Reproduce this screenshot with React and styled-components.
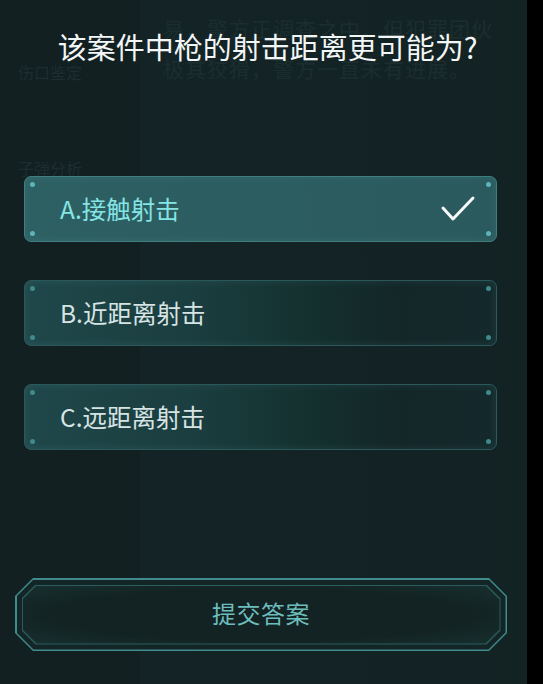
import React from 'react';
import styled, { createGlobalStyle } from 'styled-components';

const GlobalStyle = createGlobalStyle`
  html, body {
    margin: 0;
    padding: 0;
    background: #000;
  }
  body {
    font-family: "Noto Sans CJK SC", "Noto Sans", sans-serif;
  }
`;

const Screen = styled.div`
  width: 543px;
  height: 684px;
  display: grid;
  grid-template-columns: 527px 16px;
  overflow: hidden;
`;

const Edge = styled.div`
  background: #000;
`;

const Stage = styled.div`
  position: relative;
  background: #132122;
  overflow: hidden;
`;

/* dimmed page behind the quiz */
const Backdrop = styled.div`
  display: grid;
  grid-template-columns: 140px 1fr;
  height: 100%;
`;

const SideColumn = styled.div`
  background: #122021;
  padding: 60px 0 0 18px;
  display: flex;
  flex-direction: column;
  gap: 72px;
`;

const GhostLabel = styled.div`
  color: #1c2e2f;
  font-size: 16px;
  line-height: 24px;
`;

const StoryColumn = styled.div`
  padding: 8px 0 0 23px;
  background: linear-gradient(90deg, #142426 0%, #132223 100%);
`;

const GhostText = styled.p`
  margin: 0;
  color: #1b2e2f;
  font-size: 21px;
  line-height: 40px;
  letter-spacing: 1px;
`;

const Overlay = styled.div`
  position: absolute;
  inset: 0;
  display: flex;
  flex-direction: column;
  padding: 26px 30px 0 24px;
`;

const Title = styled.h1`
  margin: 0 0 0 14px;
  color: #f2f6f6;
  font-size: 29px;
  font-weight: 400;
  line-height: 40px;
  text-align: center;
`;

const OptionList = styled.div`
  margin-top: 110px;
  display: flex;
  flex-direction: column;
  gap: 38px;
`;

const Option = styled.div`
  position: relative;
  height: 66px;
  box-sizing: border-box;
  border-radius: 7px;
  border: 1px solid ${p => (p.$selected ? '#3f7f82' : '#2a585b')};
  background: ${p => (p.$selected
    ? 'linear-gradient(90deg, #2d6063 0%, #2c5d60 55%, #2a5a5d 100%)'
    : 'linear-gradient(90deg, #1f4749 0%, #1b3e40 35%, #14302f 60%, #132628 80%, #14292c 100%)')};
  box-shadow: inset 0 0 10px rgba(120, 200, 200, 0.12);
  display: flex;
  align-items: center;
  justify-content: space-between;
  padding: 0 18px 0 35px;
`;

const OptionText = styled.span`
  color: ${p => (p.$selected ? '#85e4e4' : '#d7e4e4')};
  font-size: 24.5px;
  line-height: 32px;
`;

const Dot = styled.span`
  position: absolute;
  width: 5px;
  height: 5px;
  border-radius: 50%;
  background: ${p => (p.$selected ? '#5cb5b7' : '#3f8a8c')};
  ${p => (p.$top ? 'top: 5px;' : 'bottom: 5px;')}
  ${p => (p.$left ? 'left: 5px;' : 'right: 5px;')}
`;

const Spacer = styled.div`
  flex: 1;
`;

const chamfer = c => `polygon(${c}px 0, calc(100% - ${c}px) 0, 100% ${c}px, 100% calc(100% - ${c}px), calc(100% - ${c}px) 100%, ${c}px 100%, 0 calc(100% - ${c}px), 0 ${c}px)`;

const SubmitFrame = styled.div`
  margin: 0 -10px 33px -9px;
  height: 73px;
  box-sizing: border-box;
  padding: 1.5px;
  background: #3f8b8d;
  clip-path: ${chamfer(18)};
`;

const SubmitGap = styled.div`
  height: 100%;
  box-sizing: border-box;
  padding: 5px;
  background: #142526;
  clip-path: ${chamfer(17)};
`;

const SubmitInner = styled.div`
  height: 100%;
  box-sizing: border-box;
  padding: 1px;
  background: #295c5e;
  clip-path: ${chamfer(14)};
`;

const SubmitButton = styled.button`
  width: 100%;
  height: 100%;
  border: 0;
  margin: 0;
  background: radial-gradient(ellipse at center, #132222 60%, #17302f 100%);
  clip-path: ${chamfer(14)};
  color: #6dbdbd;
  font-family: "Noto Sans CJK SC", "Noto Sans", sans-serif;
  font-size: 24px;
  letter-spacing: 0.5px;
  display: flex;
  align-items: center;
  justify-content: center;
  padding: 0 0 4px 0;
`;

const Check = () => (
  <svg width="40" height="32" viewBox="0 0 40 32">
    <polyline points="5,15 15,26 35,5" fill="none" stroke="#f4f8f8" strokeWidth="3" strokeLinecap="round" strokeLinejoin="round" />
  </svg>
);

const options = [
  { key: 'A', text: 'A.接触射击', selected: true },
  { key: 'B', text: 'B.近距离射击' },
  { key: 'C', text: 'C.远距离射击' },
];

const App = () => (
  <>
    <GlobalStyle />
    <Screen>
      <Stage>
        <Backdrop>
          <SideColumn>
            <GhostLabel>伤口鉴定</GhostLabel>
            <GhostLabel>子弹分析</GhostLabel>
          </SideColumn>
          <StoryColumn>
            <GhostText>易，警方正调查之中，但犯罪团伙</GhostText>
            <GhostText>极其狡猾，警方一直未有进展。</GhostText>
          </StoryColumn>
        </Backdrop>
        <Overlay>
          <Title>该案件中枪的射击距离更可能为?</Title>
          <OptionList>
            {options.map(o => (
              <Option key={o.key} $selected={o.selected}>
                <Dot $top $left $selected={o.selected} />
                <Dot $top $selected={o.selected} />
                <Dot $left $selected={o.selected} />
                <Dot $selected={o.selected} />
                <OptionText $selected={o.selected}>{o.text}</OptionText>
                {o.selected && <Check />}
              </Option>
            ))}
          </OptionList>
          <Spacer />
          <SubmitFrame>
            <SubmitGap>
              <SubmitInner>
                <SubmitButton>提交答案</SubmitButton>
              </SubmitInner>
            </SubmitGap>
          </SubmitFrame>
        </Overlay>
      </Stage>
      <Edge />
    </Screen>
  </>
);

export default App;
